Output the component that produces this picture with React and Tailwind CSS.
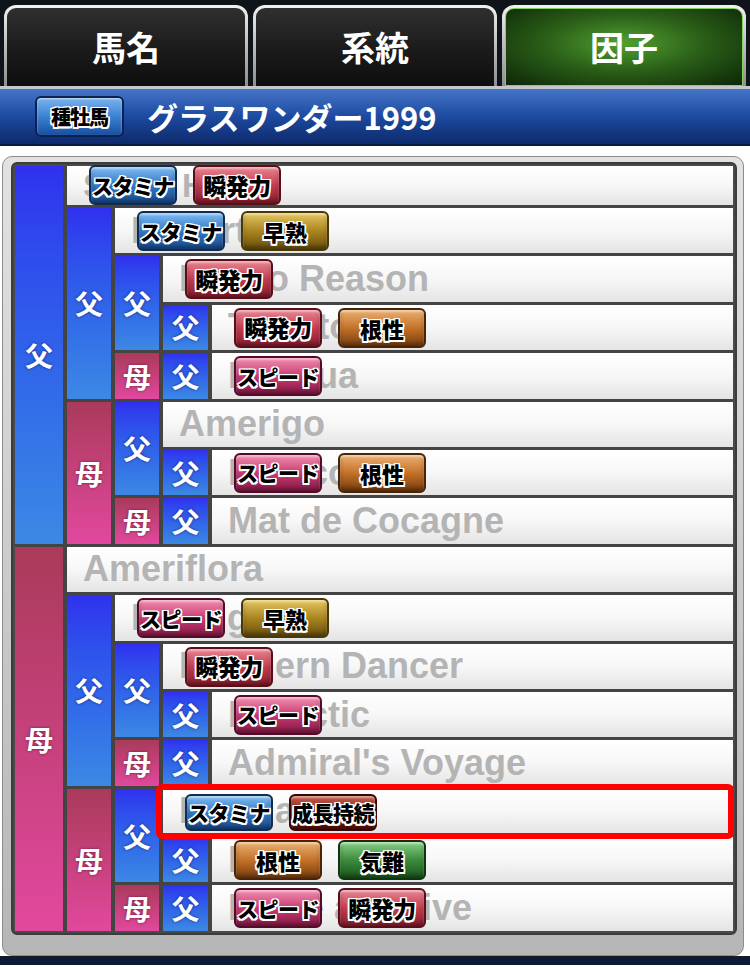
import React from 'react';

const JP = "font-['Noto_Sans_CJK_JP','Noto_Sans',sans-serif]";
const OUTLINE = '[text-shadow:-1.5px_-1.5px_0_#fff,1.5px_-1.5px_0_#fff,-1.5px_1.5px_0_#fff,1.5px_1.5px_0_#fff,0_-1.5px_0_#fff,0_1.5px_0_#fff,-1.5px_0_0_#fff,1.5px_0_0_#fff]';

const FACTORS = {
    stamina: { label: 'スタミナ', size: 'text-[21px] tracking-[-0.5px]', cls: 'from-[#7fbcf0] via-[#2f79c7] to-[#1a4b8c] border-[#0f2c52]' },
    burst: { label: '瞬発力', size: 'text-[23px] tracking-[-0.5px]', cls: 'from-[#e88492] via-[#c43c50] to-[#8a1d2e] border-[#5a0e1a]' },
    early: { label: '早熟', size: 'text-[22px]', cls: 'from-[#e6c860] via-[#a98620] to-[#6a500e] border-[#4a3806]' },
    guts: { label: '根性', size: 'text-[22px]', cls: 'from-[#eab070] via-[#c47228] to-[#7a3e10] border-[#4a2406]' },
    speed: { label: 'スピード', size: 'text-[21px] tracking-[-0.5px]', cls: 'from-[#f08cb0] via-[#c83a72] to-[#881a46] border-[#560a2a]' },
    growth: { label: '成長持続', size: 'text-[21px] tracking-[-0.5px]', cls: 'from-[#c25a48] via-[#8e2618] to-[#561006] border-[#360604]' },
    temper: { label: '気難', size: 'text-[22px]', cls: 'from-[#86d086] via-[#3c8c3c] to-[#1c561c] border-[#0c360c]' },
};

const Factor = ({ kind, small }) => {
    const f = FACTORS[kind];
    return (
        <div className={`flex w-[88px] items-center justify-center rounded-[6px] border-2 bg-linear-to-b ${f.cls} ${small ? 'h-[37px]' : 'h-[40px]'} shadow-[inset_0_2px_2px_rgba(255,255,255,0.45),inset_0_-3px_4px_rgba(0,0,0,0.3)]`}>
            <span className={`${JP} ${f.size} font-black leading-none text-black ${OUTLINE}`}>{f.label}</span>
        </div>
    );
};

const NameCell = ({ pos, name, factors = [], top = 'top-[3px]', size = 'text-[36px]', boxed }) => (
    <div className={`relative flex items-center bg-linear-to-b from-white via-[#f7f7f7] to-[#e4e4e4] pl-4 ${pos} ${boxed ? 'z-10' : ''}`}>
        <span className={`whitespace-nowrap font-['Liberation_Sans',Arial,sans-serif] ${size} font-bold leading-none text-[#b4b4b4]`}>{name}</span>
        {factors.length > 0 ? (
            <div className={`absolute left-[22px] flex gap-[16px] ${top}`}>
                {factors.map((k) => <Factor key={k} kind={k} small={boxed} />)}
            </div>
        ) : null}
        {boxed ? <div className="pointer-events-none absolute -top-[5px] -bottom-[5px] -left-[7px] -right-[1px] rounded-[6px] border-[6px] border-[#ff0000]" /> : null}
    </div>
);

const Sire = ({ pos }) => (
    <div className={`flex items-center justify-center bg-linear-to-b from-[#3030ee] to-[#3d88e4] ${pos}`}>
        <span className={`${JP} text-[28px] font-bold leading-none text-white [text-shadow:0_0_3px_rgba(0,0,60,0.6)]`}>父</span>
    </div>
);

const Dam = ({ pos }) => (
    <div className={`flex items-center justify-center bg-linear-to-b from-[#aa3a5a] to-[#e2489e] ${pos}`}>
        <span className={`${JP} text-[28px] font-bold leading-none text-white [text-shadow:0_0_3px_rgba(60,0,20,0.6)]`}>母</span>
    </div>
);

const Tab = ({ label, active }) => (
    <div className="flex-1 rounded-t-[12px] bg-linear-to-b from-[#f2f2f2] via-[#bdbdbd] to-[#8e8e8e] p-[3px] pb-0">
        {active ? (
            <div className="flex h-full items-center justify-center rounded-t-[9px] border border-[#86cf62] bg-[radial-gradient(ellipse_at_50%_45%,#52a02f_0%,#2c6219_45%,#0c2507_100%)]">
                <span className={`${JP} text-[34px] font-bold leading-none text-white`}>{label}</span>
            </div>
        ) : (
            <div className="flex h-full items-center justify-center rounded-t-[9px] bg-linear-to-b from-[#303030] via-[#1c1c1c] to-[#0e0e0e]">
                <span className={`${JP} text-[34px] font-bold leading-none text-white`}>{label}</span>
            </div>
        )}
    </div>
);

export default function App() {
    return (
        <div className="h-[967px] w-[750px] overflow-hidden bg-white">
            <div className="flex h-[86px] gap-[5px] bg-[#0f131a] px-[4px] pt-[5px]">
                <Tab label="馬名" />
                <Tab label="系統" />
                <Tab label="因子" active />
            </div>
            <div className="h-[3px] bg-[#c3c6cb]" />
            <div className="flex h-[57px] items-center gap-[23px] border-b-2 border-[#081a44] bg-linear-to-b from-[#4474c8] via-[#1d4aa0] to-[#0d2a6c] pl-[35px]">
                <div className="flex h-[41px] w-[89px] items-center justify-center rounded-[6px] border-2 border-[#0b2250] bg-linear-to-b from-[#7ab2ee] via-[#3a82d4] to-[#1a4f9e] shadow-[inset_0_1px_2px_rgba(255,255,255,0.6)]">
                    <span className={`${JP} text-[20px] font-black leading-none tracking-[-1px] text-black ${OUTLINE}`}>種牡馬</span>
                </div>
                <span className={`${JP} text-[31px] font-bold leading-none text-white`}>グラスワンダー1999</span>
            </div>
            <div className="h-[10px]" />

            <div className="ml-[2px] h-[800px] w-[742px] rounded-[10px] border border-[#8c8c8c] bg-linear-to-b from-[#e2e2e2] to-[#b6b6b6] pl-[8px] pr-[6px] pt-[5px]">
                <div className="rounded-[6px] border-2 border-[#3c3c3c] bg-[#4a4a4a] p-[2px]">
                    <div className="grid grid-cols-[48px_44px_44px_45px_1fr] grid-rows-[39px_repeat(15,45.4px)] gap-x-[4px] gap-y-[3px] bg-[#444]">
                        <Sire pos="col-start-1 row-start-1 row-span-8" />
                        <Dam pos="col-start-1 row-start-9 row-span-8" />

                        <NameCell pos="col-start-2 col-span-4 row-start-1" name="Silver Hawk" factors={['stamina', 'burst']} top="-top-[1px]" size="text-[33px]" />

                        <Sire pos="col-start-2 row-start-2 row-span-4" />
                        <NameCell pos="col-start-3 col-span-3 row-start-2" name="Roberto" factors={['stamina', 'early']} />
                        <Sire pos="col-start-3 row-start-3 row-span-2" />
                        <NameCell pos="col-start-4 col-span-2 row-start-3" name="Hail to Reason" factors={['burst']} />
                        <Sire pos="col-start-4 row-start-4" />
                        <NameCell pos="col-start-5 row-start-4" name="Turn-to" factors={['burst', 'guts']} />
                        <Dam pos="col-start-3 row-start-5" />
                        <Sire pos="col-start-4 row-start-5" />
                        <NameCell pos="col-start-5 row-start-5" name="Nashua" factors={['speed']} />

                        <Dam pos="col-start-2 row-start-6 row-span-3" />
                        <Sire pos="col-start-3 row-start-6 row-span-2" />
                        <NameCell pos="col-start-4 col-span-2 row-start-6" name="Amerigo" />
                        <Sire pos="col-start-4 row-start-7" />
                        <NameCell pos="col-start-5 row-start-7" name="Nearco" factors={['speed', 'guts']} />
                        <Dam pos="col-start-3 row-start-8" />
                        <Sire pos="col-start-4 row-start-8" />
                        <NameCell pos="col-start-5 row-start-8" name="Mat de Cocagne" />

                        <NameCell pos="col-start-2 col-span-4 row-start-9" name="Ameriflora" />

                        <Sire pos="col-start-2 row-start-10 row-span-4" />
                        <NameCell pos="col-start-3 col-span-3 row-start-10" name="Danzig" factors={['speed', 'early']} />
                        <Sire pos="col-start-3 row-start-11 row-span-2" />
                        <NameCell pos="col-start-4 col-span-2 row-start-11" name="Northern Dancer" factors={['burst']} />
                        <Sire pos="col-start-4 row-start-12" />
                        <NameCell pos="col-start-5 row-start-12" name="Nearctic" factors={['speed']} />
                        <Dam pos="col-start-3 row-start-13" />
                        <Sire pos="col-start-4 row-start-13" />
                        <NameCell pos="col-start-5 row-start-13" name="Admiral's Voyage" />

                        <Dam pos="col-start-2 row-start-14 row-span-3" />
                        <Sire pos="col-start-3 row-start-14 row-span-2" />
                        <NameCell pos="col-start-4 col-span-2 row-start-14" name="His Majesty" factors={['stamina', 'growth']} top="top-[5px]" boxed />
                        <Sire pos="col-start-4 row-start-15" />
                        <NameCell pos="col-start-5 row-start-15" name="Ribot" factors={['guts', 'temper']} />
                        <Dam pos="col-start-3 row-start-16" />
                        <Sire pos="col-start-4 row-start-16" />
                        <NameCell pos="col-start-5 row-start-16" name="Raise a Native" factors={['speed', 'burst']} />
                    </div>
                </div>
            </div>
            <div className="h-[9px] border-t-2 border-[#1a1a1a] bg-[#0c1a3a]" />
        </div>
    );
}
